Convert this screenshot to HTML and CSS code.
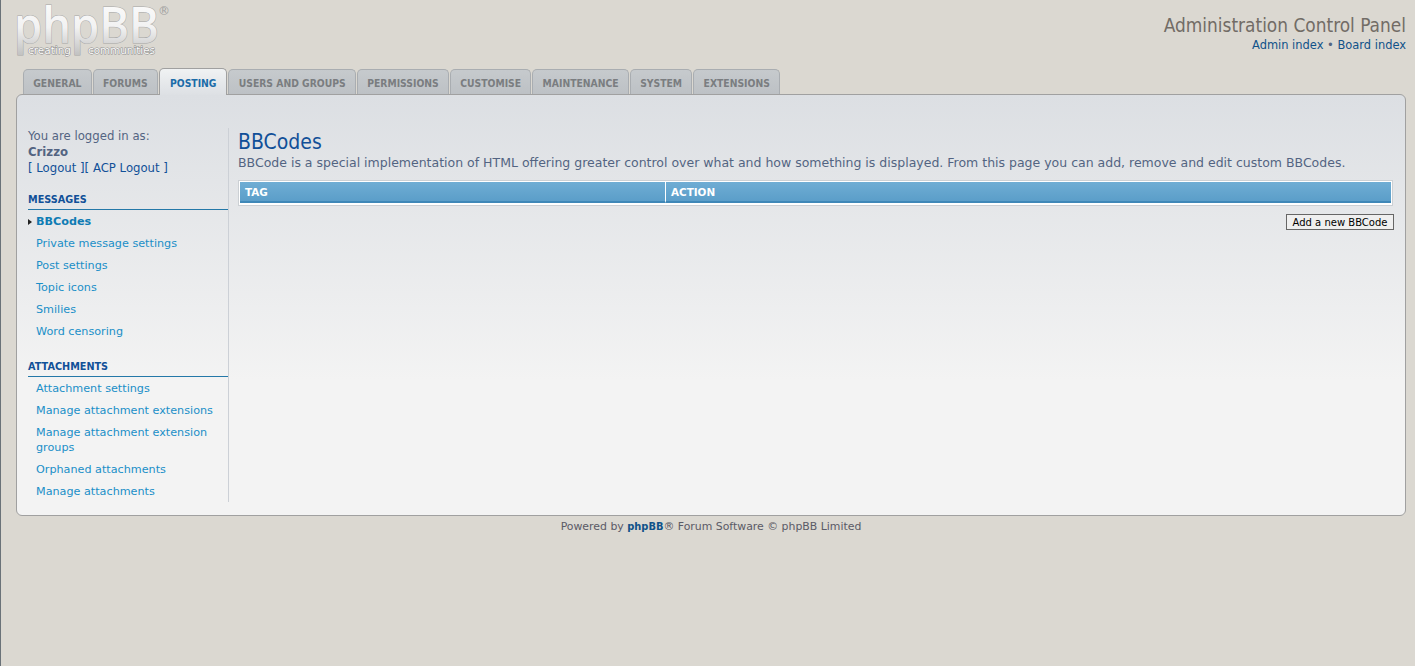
FILE: index.html
```html
<!DOCTYPE html>
<html lang="en">
<head>
<meta charset="utf-8">
<title>BBCodes</title>
<link rel="stylesheet" href="styles.css">
</head>
<body>
<div class="wrap">
  <header class="top">
    <svg class="logo" width="156" height="60" viewBox="0 0 156 60" aria-label="phpBB">
      <defs>
        <linearGradient id="lg" x1="0" y1="0" x2="0" y2="1">
          <stop offset="0" stop-color="#ffffff"/>
          <stop offset="0.55" stop-color="#f2f2f2"/>
          <stop offset="1" stop-color="#bcbcbc"/>
        </linearGradient>
      </defs>
      <text class="logo-main" x="-2" y="43" textLength="145" lengthAdjust="spacingAndGlyphs" fill="url(#lg)">phpBB</text>
      <text class="logo-sub" x="12" y="54" textLength="43" lengthAdjust="spacingAndGlyphs">creating</text>
      <text class="logo-sub" x="72" y="54" textLength="67" lengthAdjust="spacingAndGlyphs">communities</text>
      <text class="logo-reg" x="142" y="15">®</text>
    </svg>
    <div class="top-right">
      <h1 class="acp-title">Administration Control Panel</h1>
      <p class="acp-links"><a href="#">Admin index</a> • <a href="#">Board index</a></p>
    </div>
  </header>
  <nav class="tabs">
    <a class="tab" href="#">General</a>
    <a class="tab" href="#">Forums</a>
    <a class="tab active" href="#">Posting</a>
    <a class="tab" href="#">Users and groups</a>
    <a class="tab" href="#">Permissions</a>
    <a class="tab" href="#">Customise</a>
    <a class="tab" href="#">Maintenance</a>
    <a class="tab" href="#">System</a>
    <a class="tab" href="#">Extensions</a>
  </nav>
  <div class="panel">
    <aside class="side">
      <div class="user">
        <div>You are logged in as:</div>
        <strong>Crizzo</strong>
        <div class="user-links">[ <a href="#">Logout</a> ][ <a href="#">ACP Logout</a> ]</div>
      </div>
      <h3 class="group">Messages</h3>
      <ul class="menu">
        <li class="current"><a href="#">BBCodes</a></li>
        <li><a href="#">Private message settings</a></li>
        <li><a href="#">Post settings</a></li>
        <li><a href="#">Topic icons</a></li>
        <li><a href="#">Smilies</a></li>
        <li><a href="#">Word censoring</a></li>
      </ul>
      <h3 class="group second">Attachments</h3>
      <ul class="menu">
        <li><a href="#">Attachment settings</a></li>
        <li><a href="#">Manage attachment extensions</a></li>
        <li><a href="#">Manage attachment extension groups</a></li>
        <li><a href="#">Orphaned attachments</a></li>
        <li><a href="#">Manage attachments</a></li>
      </ul>
    </aside>
    <main class="main">
      <h2 class="title">BBCodes</h2>
      <p class="intro">BBCode is a special implementation of HTML offering greater control over what and how something is displayed. From this page you can add, remove and edit custom BBCodes.</p>
      <table class="grid">
        <thead>
          <tr><th class="col-tag">Tag</th><th>Action</th></tr>
        </thead>
      </table>
      <div class="actions"><button class="btn" type="button">Add a new BBCode</button></div>
    </main>
  </div>
  <footer class="foot">Powered by <a href="#">phpBB</a>® Forum Software © phpBB Limited</footer>
</div>
</body>
</html>
```

FILE: styles.css
```css
* { box-sizing: border-box; }
html, body { height: 100%; }
body {
  margin: 0;
  background: #dbd8d1;
  border-left: 1px solid #6a7278;
  font-family: "DejaVu Sans", Verdana, sans-serif;
  font-size: 11.2px;
  color: #536482;
  overflow: hidden;
}
a { text-decoration: none; }
.wrap { padding: 0 9px 0 15px; }

.top { display: flex; justify-content: space-between; height: 68px; }
.logo { display: block; }
.logo-main { font-family: "Open Sans", sans-serif; font-size: 50px; font-weight: 600; stroke: #a6a6a6; stroke-width: 1px; paint-order: stroke; }
.logo-sub { font-family: "DejaVu Sans", sans-serif; font-size: 10px; fill: #fbfbfb; stroke: #8c8c8c; stroke-width: 1px; paint-order: stroke; }
.logo-reg { font-family: "DejaVu Sans", sans-serif; font-size: 12px; fill: #a0a0a0; }
.top-right { text-align: right; padding-top: 15px; }
.acp-title { margin: 0; font-family: "DejaVu Sans Condensed", "DejaVu Sans", sans-serif; font-size: 18.9px; line-height: 21px; font-weight: 400; color: #726c66; }
.acp-links { margin: 2px 0 0; font-size: 11.45px; line-height: 15px; color: #536482; }
.acp-links a { color: #105289; }

.tabs { display: flex; align-items: flex-end; gap: 1px; padding-left: 7px; height: 26px; position: relative; z-index: 1; }
.tab {
  display: block;
  height: 25px;
  padding: 7px 9.25px 0;
  border: 1px solid #a9adb1;
  border-bottom: 0;
  border-radius: 5px 5px 0 0;
  background: linear-gradient(#c6cacd, #bdc1c5);
  color: #7a7d80;
  font-family: "DejaVu Sans Condensed", "DejaVu Sans", sans-serif;
  font-size: 10.3px;
  line-height: 13px;
  font-weight: 700;
  text-transform: uppercase;
}
.tab.active {
  height: 27px;
  margin-bottom: -1px;
  padding: 8px 10px 0;
  background: linear-gradient(#f0f2f3, #dde0e4);
  border-color: #a0a0a0;
  color: #1b6ca8;
}

.panel {
  display: flex;
  width: 1390px;
  height: 422px;
  padding: 33px 11px 13px 11px;
  border: 1px solid #a0a0a0;
  border-radius: 6px;
  background: linear-gradient(#dcdfe3 0, #f3f3f3 68%);
}
.side { width: 201px; flex: none; border-right: 1px solid #ccd0d6; padding-top: 1px; }
.user { font-size: 11.7px; line-height: 15px; }
.user strong { display: block; line-height: 17px; }
.user-links { color: #115098; line-height: 15px; }
.user-links a { color: #115098; }
.group {
  margin: 17px 0 0;
  padding-bottom: 2px;
  border-bottom: 1px solid #2478a8;
  font-size: 9.7px;
  line-height: 14px;
  font-weight: 700;
  text-transform: uppercase;
  color: #115098;
}
.group.second { margin-top: 18px; }
.menu { list-style: none; margin: 0; padding: 0; }
.menu li { padding: 4px 0 3px 8px; line-height: 15px; position: relative; }
.menu a { color: #1a8fc8; }
.menu .current a { color: #0f7cb4; font-weight: 700; }
.menu .current::before {
  content: "";
  position: absolute;
  left: 0;
  top: 9px;
  border-left: 4px solid #222;
  border-top: 3px solid transparent;
  border-bottom: 3px solid transparent;
}

.main { flex: 1; min-width: 0; padding-left: 9px; }
.title { margin: 2px 0 0; font-family: "DejaVu Sans Condensed", "DejaVu Sans", sans-serif; font-size: 21px; line-height: 25px; font-weight: 400; color: #115098; }
.intro { margin: 0; font-size: 12.5px; line-height: 16px; color: #536482; }
.grid {
  width: 1155px;
  margin-top: 9px;
  border: 1px solid #ccd0d4;
  border-collapse: separate;
  border-spacing: 0;
  background: #fff;
  padding: 1px 1px 2px;
}
.grid th {
  height: 21px;
  padding: 0 5px;
  border-bottom: 2px solid #3f88b8;
  background: linear-gradient(#6fadd4, #5b9ec9);
  color: #fff;
  font-size: 10.4px;
  font-weight: 700;
  text-align: left;
  text-transform: uppercase;
}
.grid .col-tag { width: 426px; border-right: 1px solid #fff; }
.actions { display: flex; justify-content: flex-end; margin: 8px 0 0; width: 1156px; }
.btn {
  height: 16px;
  width: 108px;
  padding: 1px 0 0;
  border: 1px solid #666;
  background: #efefef;
  font-family: "DejaVu Sans", Verdana, sans-serif;
  font-size: 10px;
  line-height: 13px;
  color: #000;
}

.foot { padding-top: 4px; text-align: center; font-size: 10.9px; line-height: 13px; color: #5a5a66; }
.foot a { color: #105289; font-size: 9.9px; font-weight: 700; }
```
